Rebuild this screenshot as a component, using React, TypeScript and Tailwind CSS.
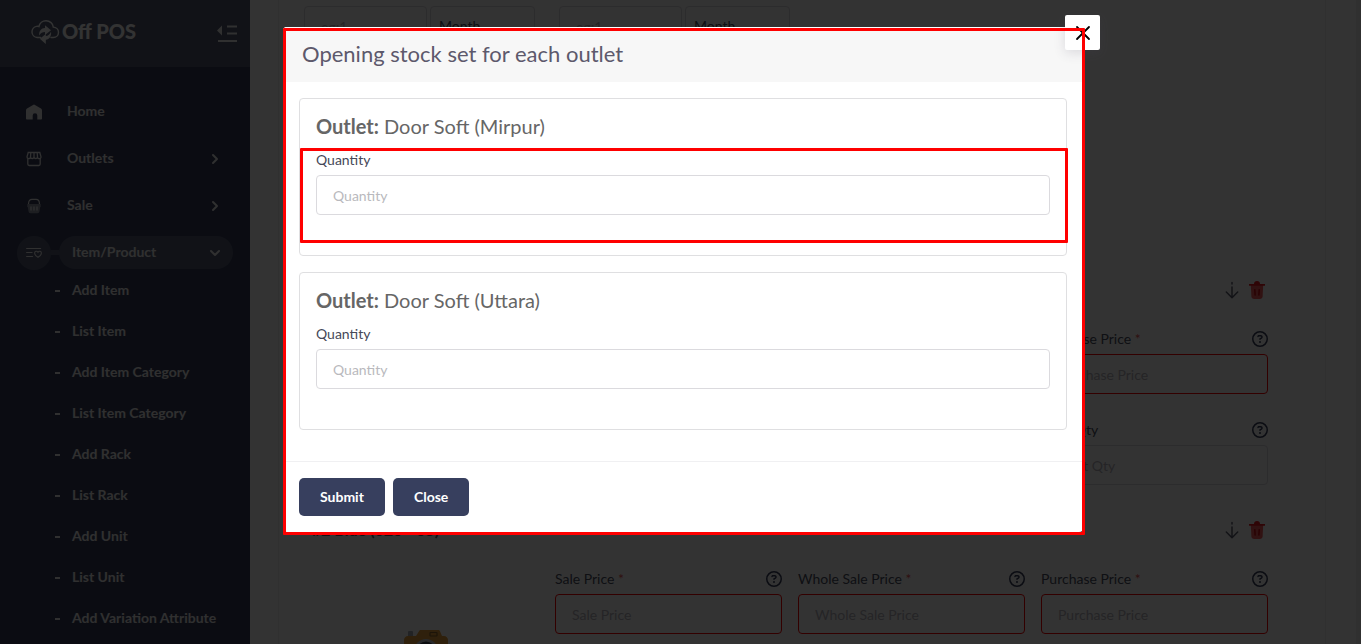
import { useState } from "react";
import { FaRegCircleQuestion } from "react-icons/fa6";
import { ChevronDown, ChevronRight, X } from "lucide-react";

const subItems = [
  "Add Item",
  "List Item",
  "Add Item Category",
  "List Item Category",
  "Add Rack",
  "List Rack",
  "Add Unit",
  "List Unit",
  "Add Variation Attribute",
];

function CloudLogo() {
  return (
    <svg viewBox="0 0 30 26" className="h-[26px] w-[30px]" fill="none" aria-hidden="true">
      <path
        d="M10.500 18.500H7.200A5.6 5.6 0 0 1 6.6 7.4 C7.6 7.2 8.4 7.3 9 7.5 C9.6 4 12.6 1.8 16 1.8 c4 0 7 2.800 7.300 6.300 c3 .2 5.200 2.400 5.200 5.200 0 3-2.300 5.200-5.200 5.200H21"
        stroke="currentColor"
        strokeWidth="1.4"
        strokeLinecap="round"
      />
      <path d="M9.300 16.500c-.6-4.500 2-7.300 5.700-7.500V6.300l6 4.900-6 4.800v-2.900c-2.700 0-4.200 1-5.700 3.400Z" fill="currentColor" />
      <path d="M21 12.800c.7 4.500-1.600 7.500-5.200 7.900v4.300l-6-5.300 6-4.700v2.100c2.500-.2 3.900-1.600 5.200-4.300Z" fill="currentColor" />
    </svg>
  );
}

function CollapseIcon() {
  return (
    <svg viewBox="0 0 20 18" className="h-[18px] w-5" fill="currentColor" aria-hidden="true">
      <path d="M0 5.500 5 .5v10ZM10 .5h10v2H10zM10 7.500h10v2H10zM1 15h19v2H1z" />
    </svg>
  );
}

function HomeIcon() {
  return (
    <svg viewBox="0 0 16 16" className="h-4 w-4" fill="currentColor" aria-hidden="true">
      <path d="M7 .9a1.700 1.700 0 0 1 2 0l6 3.500c.6.500 1 1.100 1 1.900v8.100c0 .6-.5 1.100-1.100 1.100h-3.600V11.600a2.300 2.300 0 0 0-4.600 0v3.900H1.100C.5 15.500 0 15 0 14.400V6.300c0-.8.4-1.400 1-1.900Z" />
    </svg>
  );
}

function StoreIcon() {
  return (
    <svg viewBox="0 0 16 16" className="h-4 w-4" fill="none" stroke="currentColor" strokeWidth="1.300" aria-hidden="true">
      <path d="M2.200 1.500h11.600l1.200 4.300a1.700 1.700 0 0 1-3.500.3 1.800 1.800 0 0 1-3.500 0 1.800 1.800 0 0 1-3.500 0A1.700 1.700 0 0 1 1 5.800ZM4.800 1.500 4.500 6M8 1.500V6M11.200 1.500l.3 4.500M1.800 7.500v5.600c0 .8.6 1.400 1.400 1.400h9.600c.8 0 1.400-.6 1.400-1.400V7.500" />
    </svg>
  );
}

function BasketIcon() {
  return (
    <svg viewBox="0 0 16 16" className="h-4 w-4" fill="none" aria-hidden="true">
      <path d="M2.500 6C2.500 2.500 4 1.300 6 1.300h4c2 0 3.500 1.200 3.500 4.700" stroke="currentColor" strokeWidth="1.200" />
      <path d="M1.300 6h13.400v3h-.5l-.7 4.300c-.2 1.200-.9 1.900-2.100 1.900H4.600c-1.200 0-1.900-.7-2.100-1.900L1.800 9h-.5Z" fill="currentColor" opacity=".5" />
      <path d="M5 8.500v4M8 8.500v4M11 8.500v4" stroke="currentColor" strokeWidth="1.300" />
    </svg>
  );
}

function ListHeartIcon() {
  return (
    <svg viewBox="0 0 16 12" className="h-3 w-4" fill="none" stroke="currentColor" strokeWidth="1.100" strokeLinecap="round" aria-hidden="true">
      <path d="M.6 1.500h14M.6 5.500h5.500M.6 9.500h6" />
      <path d="M12 10.300C9.800 8.900 8.600 7.600 8.600 6c0-1.900 2.400-2.500 3.400-.8 1-1.700 3.400-1.100 3.400.8 0 1.600-1.200 2.900-3.400 4.300Z" />
    </svg>
  );
}

function DownArrowIcon() {
  return (
    <svg viewBox="0 0 14 18" className="h-[18px] w-3.5" fill="none" stroke="currentColor" strokeWidth="1.500" strokeLinecap="round" strokeLinejoin="round" aria-hidden="true">
      <path d="M7 1.500v1.500M7 6v10.500M1.300 11 7 16.700l5.700-5.700" />
    </svg>
  );
}

function TrashIcon() {
  return (
    <svg viewBox="0 0 16 18" className="h-[18px] w-4" aria-hidden="true">
      <path d="M1.800 4h12.400l-.6 11.200A3 3 0 0 1 10.700 18H5.300a3 3 0 0 1-2.900-2.800Z" fill="#f2595c" />
      <path d="M0 3h5a3 3 0 0 1 6 0h5v1.800H0Z" fill="#ea1c1f" />
      <path d="m5.800 8.800.3 5.200M10.200 8.800 9.900 14" stroke="#c90c10" strokeWidth="1.500" strokeLinecap="round" />
    </svg>
  );
}

function CameraIcon() {
  return (
    <svg viewBox="0 0 44 36" className="h-9 w-11" aria-hidden="true">
      <rect x="4" y="1" width="5" height="6" rx="1" fill="#a9b0b8" />
      <path d="M12 6 15 1.200C15.400.5 16 0 17 0h17c1 0 1.600.5 2 1.200L38 6h2c2.200 0 4 1.800 4 4v22c0 2.200-1.800 4-4 4H4c-2.200 0-4-1.800-4-4V10c0-2.200 1.800-4 4-4Z" fill="#e8a13c" />
      <rect x="26" y="2.500" width="7" height="3.500" rx=".5" fill="none" stroke="#8c6430" strokeWidth="1.200" />
      <circle cx="22" cy="21" r="12" fill="#c9ced4" />
      <circle cx="22" cy="21" r="9.500" fill="#3a3f4a" />
    </svg>
  );
}

function Sidebar() {
  const rows = [
    { label: "Home", icon: <HomeIcon />, more: false },
    { label: "Outlets", icon: <StoreIcon />, more: true },
    { label: "Sale", icon: <BasketIcon />, more: true },
  ];
  return (
    <aside className="h-full w-[250px] shrink-0 overflow-hidden bg-[#373f5c] text-sm font-bold text-[#ededed]">
      <div className="flex h-[67px] items-center justify-between bg-[#565d76] pr-[13px] pl-[30px]">
        <a href="#" className="flex items-center gap-0.5 pb-1 text-white">
          <CloudLogo />
          <span className="pb-0.5 text-[20px] leading-6 font-black">Off POS</span>
        </a>
        <button type="button" aria-label="Collapse menu">
          <CollapseIcon />
        </button>
      </div>
      <nav className="pt-[21px]">
        {rows.map((r) => (
          <a key={r.label} href="#" className="flex h-[47px] items-center pr-[27px] pl-[26px]">
            {r.icon}
            <span className="ml-[25px] flex-1 pb-0.5">{r.label}</span>
            {r.more && <ChevronRight size={16} strokeWidth={3} />}
          </a>
        ))}
        <a href="#" className="flex h-[47px] items-center pr-[17px] pl-[17px]">
          <span className="flex h-[34px] w-[34px] items-center justify-center rounded-full bg-[#565d76]">
            <ListHeartIcon />
          </span>
          <span className="h-[5px] w-2 bg-[#565d76]" />
          <span className="flex h-[33px] flex-1 items-center justify-between rounded-full bg-[#565d76] pr-2.5 pl-[13px]">
            <span className="pb-0.5">Item/Product</span>
            <ChevronDown size={16} strokeWidth={3} />
          </span>
        </a>
        <ul className="-mt-1.5">
          {subItems.map((s) => (
            <li key={s}>
              <a href="#" className="flex h-[41px] items-center gap-3 pl-[55px]">
                <span className="h-0.5 w-[5px] bg-current" />
                <span className="pb-0.5">{s}</span>
              </a>
            </li>
          ))}
        </ul>
      </nav>
    </aside>
  );
}

function PriceField({ id, label, required }: { id: string; label: string; required?: boolean }) {
  return (
    <div>
      <div className="flex items-center justify-between">
        <label htmlFor={id} className="text-sm leading-[18px] text-[#4b4f63]">
          {label} {required && <span className="text-[#ea5455]">*</span>}
        </label>
        <FaRegCircleQuestion size={16} className="text-[#373f5c]" />
      </div>
      <input
        id={id}
        placeholder={label}
        className={`mt-1.5 block h-10 w-full rounded border bg-transparent px-4 text-sm placeholder:text-[#b7b5be] ${
          required ? "border-[#ff0000]" : "border-[#dbdade]"
        }`}
      />
    </div>
  );
}

function Duration({ id }: { id: string }) {
  return (
    <div className="flex gap-[3px]">
      <input
        aria-label="Period"
        placeholder="eg:1"
        className="h-10 w-[123px] rounded border border-[#dbdade] px-4 text-sm placeholder:text-[#b7b5be]"
      />
      <select
        id={id}
        aria-label="Period unit"
        className="h-10 min-w-0 flex-1 appearance-none rounded border border-[#dbdade] px-2 text-sm text-[#4b4f63]"
      >
        <option>Month</option>
      </select>
    </div>
  );
}

function VariationHeader({ title }: { title?: string }) {
  return (
    <div className="flex h-5 items-center pr-[3px]">
      {title && <h3 className="text-base leading-5 font-bold text-[#4b4f63]">{title}</h3>}
      <div className="ml-auto flex items-center gap-2.5">
        <button type="button" aria-label="Move down" className="text-[#5d5f70]">
          <DownArrowIcon />
        </button>
        <button type="button" aria-label="Delete">
          <TrashIcon />
        </button>
      </div>
    </div>
  );
}

function Page() {
  return (
    <main className="h-full min-w-0 flex-1 overflow-hidden border-r-[5px] border-[#f0f0f0] bg-white pr-[30px] pl-7">
      <div className="h-full border-x border-[#ededed] px-[25px] pt-1.5">
        <div className="grid grid-cols-4 gap-6">
          <Duration id="warranty-unit" />
          <Duration id="guarantee-unit" />
        </div>
        <div className="mt-[234px] flex flex-col gap-[35px] pr-8 pl-2">
          <section>
            <VariationHeader />
            <div className="mt-[30px] grid grid-cols-4 gap-x-4 gap-y-[27px]">
              <div className="col-start-4">
                <PriceField id="purchase-1" label="Purchase Price" required />
              </div>
              <div className="col-start-4">
                <PriceField id="alert-1" label="Alert Qty" />
              </div>
            </div>
          </section>
          <section>
            <VariationHeader title="#2 Blue (020 - 05)" />
            <div className="mt-[30px] grid grid-cols-4 gap-4">
              <div className="flex justify-center pt-[60px]">
                <CameraIcon />
              </div>
              <PriceField id="sale-2" label="Sale Price" required />
              <PriceField id="whole-2" label="Whole Sale Price" required />
              <PriceField id="purchase-2" label="Purchase Price" required />
            </div>
          </section>
        </div>
      </div>
    </main>
  );
}

function OutletCard({ name, id, highlighted }: { name: string; id: string; highlighted?: boolean }) {
  return (
    <section className="relative rounded border border-[#dfdfe1] px-4 pt-4 pb-10">
      <h3 className="text-xl leading-[22px] text-[#666666]">
        <b>Outlet:</b> {name}
      </h3>
      <label htmlFor={id} className="mt-3.5 block text-sm leading-[18px] text-[#454857]">
        Quantity
      </label>
      <input
        id={id}
        placeholder="Quantity"
        className="mt-1.5 block h-10 w-full rounded border border-[#dbdade] px-4 text-sm placeholder:text-[#b9b9bd]"
      />
      {highlighted && (
        <div className="pointer-events-none absolute top-[49px] -right-0.5 left-0 h-[95px] rounded-[1px] border-3 border-[#ff0000]" />
      )}
    </section>
  );
}

function StockDialog({ onClose }: { onClose: () => void }) {
  return (
    <div className="fixed inset-0 flex items-start justify-center bg-black/80 pt-[27px] pl-[5px]">
      <div role="dialog" aria-labelledby="stock-title" className="relative w-full max-w-[800px] rounded bg-white">
        <header className="rounded-t border-t border-white bg-[#f7f7f7] px-[19px] pt-3 pb-3.5">
          <h2 id="stock-title" className="text-[22px] leading-7 text-[#5d596c]">
            Opening stock set for each outlet
          </h2>
        </header>
        <div className="flex flex-col gap-4 px-4 pt-4 pb-[31px]">
          <OutletCard id="qty-mirpur" name="Door Soft (Mirpur)" highlighted />
          <OutletCard id="qty-uttara" name="Door Soft (Uttara)" />
        </div>
        <footer className="flex gap-2 border-t border-[#f0f0f2] p-4">
          <button type="button" className="h-[38px] rounded-[5px] bg-[#373f5e] px-[21px] text-sm font-bold text-white">
            Submit
          </button>
          <button type="button" onClick={onClose} className="h-[38px] rounded-[5px] bg-[#373f5e] px-[21px] text-sm font-bold text-white">
            Close
          </button>
        </footer>
        <button
          type="button"
          aria-label="Close dialog"
          onClick={onClose}
          className="absolute -top-3 -right-[17px] flex h-[35px] w-[35px] items-center justify-center rounded-xs bg-white text-black shadow-[0_3px_12px_rgba(75,70,92,0.16)]"
        >
          <X size={24} strokeWidth={1.8} />
        </button>
        <div className="pointer-events-none absolute top-px -right-0.5 -bottom-[3px] left-0 rounded-[1px] border-3 border-[#ff0000]" />
      </div>
    </div>
  );
}

export default function App() {
  const [open, setOpen] = useState(true);
  return (
    <div className="flex h-screen overflow-hidden font-['Lato','Open_Sans',sans-serif]">
      <Sidebar />
      <Page />
      {open && <StockDialog onClose={() => setOpen(false)} />}
    </div>
  );
}
